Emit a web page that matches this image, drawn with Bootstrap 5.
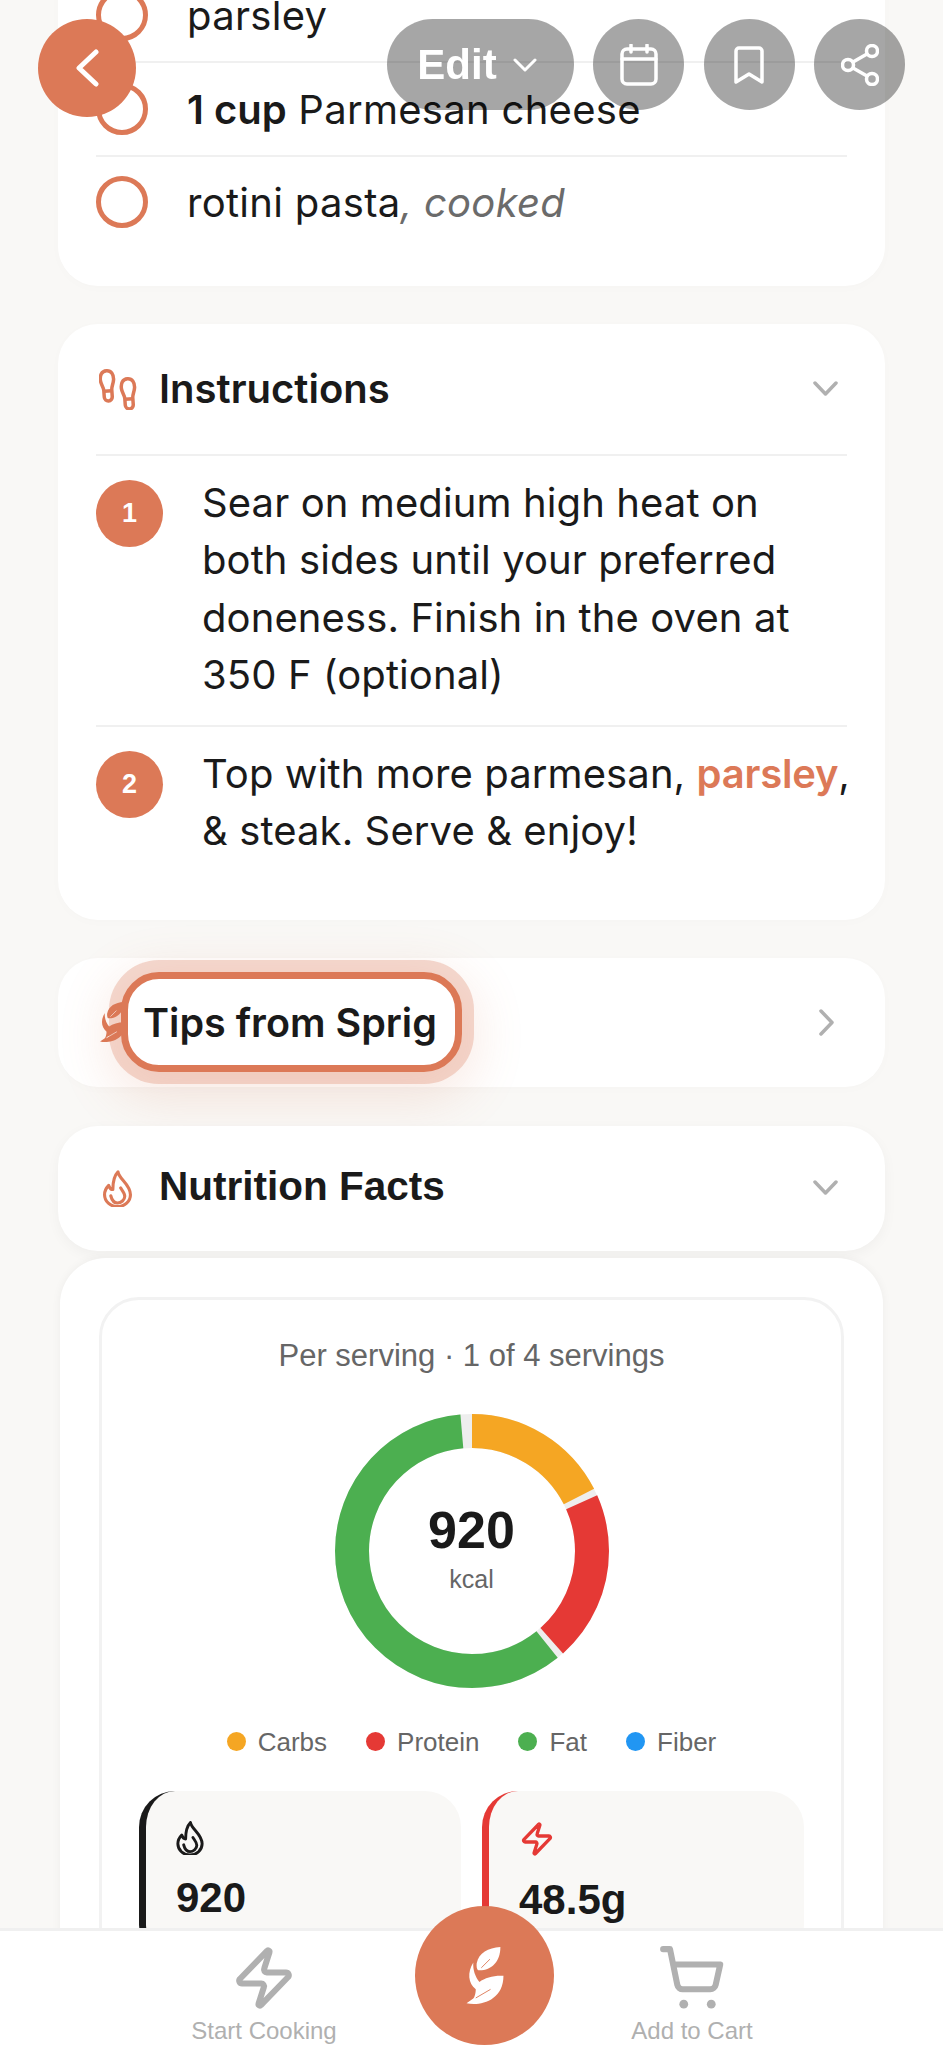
<!DOCTYPE html>
<html>
<head>
    <title>Recipe</title>
    <link href="https://cdn.jsdelivr.net/npm/bootstrap@5.3.0/dist/css/bootstrap.min.css" rel="stylesheet">
    <script src="https://cdn.jsdelivr.net/npm/bootstrap@5.3.0/dist/js/bootstrap.bundle.min.js"></script>
    <style>
        html, body { height: 2047px; overflow: hidden; }
        body { background: #f9f8f6; color: #1a1a1a; font-family: "Inter", "Liberation Sans", sans-serif; font-size: 40px; line-height: 57.3px; }
        svg { display: block; flex: none; }
        .page-scroll { height: 2078px; padding: 0 58px; margin-top: -31px; overflow: hidden; }
        .recipe-card { background: #fff; border: 0; border-radius: 40px; margin-bottom: 38px; box-shadow: 0 2px 12px rgba(0,0,0,.015); }
        .ingredients { padding: 0 38px 39px; border-radius: 0 0 40px 40px; }
        .ing-row { height: 94px; gap: 39px; letter-spacing: .3px; border-bottom: 2px solid #f0f0f0; }
        .ing-row.last-row { height: 90px; border-bottom: 0; }
        .ing-text { padding-top: 2px; }
        .check-ring { width: 52px; height: 52px; border: 5px solid #dc7957; border-radius: 50%; flex: none; }
        .qty { font-weight: 600; letter-spacing: 0; }
        .note { color: #6b6b6b; font-style: italic; }
        .sec-head { height: 130px; padding: 0 47px 0 41px; gap: 21px; font-weight: 600; }
        .sec-title { flex: 1; }
        .steps { margin: 0 38px; padding-bottom: 38px; border-top: 2px solid #f0f0f0; }
        .step-row { gap: 39px; padding: 18px 0 22px; letter-spacing: .1px; }
        .step-row + .step-row { border-top: 2px solid #f0f0f0; }
        .step-text { margin-right: -8px; }
        .step-num { width: 67px; height: 67px; margin-top: 6px; border-radius: 50%; background: #dc7957; color: #fff; font: 700 27px "Liberation Sans", sans-serif; flex: none; }
        .step-link { color: #dc7957; font-weight: 600; letter-spacing: -.2px; }
        .tips-card { height: 129px; margin-bottom: 39px; }
        .tips-spot { position: absolute; left: 63px; top: 14px; height: 100px; padding: 3px 18px 0 15px; background: #fff; border: 7px solid #dc7957; border-radius: 38px; font-size: 39.500px; font-weight: 600; white-space: nowrap; box-shadow: 0 0 0 12px rgba(220,122,90,.28), 0 14px 50px 14px rgba(220,122,90,.16); }
        .nutri-head { height: 125px; margin-bottom: 7px; font-family: "Liberation Sans", sans-serif; font-weight: 700; font-size: 40.500px; box-shadow: 0 4px 14px rgba(0,0,0,.04); }
        .nutri-title { padding-bottom: 4px; }
        .flame-icon { margin: 0 6px 0 4px; }
        .nutri-card { margin: 0 2px; padding: 39px 39px 0; border-radius: 46px; font-family: "Liberation Sans", sans-serif; box-shadow: 0 0 10px rgba(0,0,0,.05); }
        .nutri-box { height: 680px; padding: 36px 37px 0; border: 3px solid #f2f2f2; border-radius: 40px; }
        .serving { color: #666; font-size: 31px; line-height: 40px; }
        .donut-wrap { width: 274px; height: 274px; margin: 38px auto 0; }
        .donut-label { position: absolute; inset: 0; padding-bottom: 6px; }
        .kcal-num { font-size: 52px; font-weight: 700; line-height: 60px; }
        .kcal-unit { margin-top: 3px; color: #666; font-size: 25px; line-height: 32px; }
        .legend-line { gap: 39px; margin-top: 38px; color: #666; font-size: 26px; line-height: 32px; }
        .legend-dot { width: 19px; height: 19px; margin-right: 12px; border-radius: 50%; }
        .stat-grid { display: grid; grid-template-columns: 1fr 1fr; gap: 21px; margin-top: 33px; }
        .stat-box { padding: 30px 30px; height: 170px; background: #f9f8f6; border-left: 7px solid #1a1a1a; border-radius: 36px; }
        .stat-box.red-line { border-left-color: #e53935; }
        .stat-val { margin-top: 18px; font-size: 42px; font-weight: 700; line-height: 50px; }
        .top-actions { position: fixed; top: 19px; left: 38px; right: 38px; }
        .back-btn { width: 98px; height: 98px; background: #dc7957; }
        .float-btn { width: 91px; height: 91px; margin-left: 19.500px; background: rgba(0,0,0,.35); }
        .edit-btn { width: 187px; height: 91px; padding-right: 6px !important; gap: 16px; background: rgba(0,0,0,.35); color: #fff; font: 700 42px "Liberation Sans", sans-serif; }
        .bottom-nav { position: fixed; left: 0; right: 0; bottom: 0; height: 119px; background: #fff; border-top: 3px solid #f0f0f0; font-family: "Liberation Sans", sans-serif; }
        .nav-act { position: absolute; top: 14px; color: #b0b0b0; font-size: 24px; line-height: 28px; white-space: nowrap; }
        .nav-act span { margin-top: 6px; }
        .fab-btn { position: absolute; left: 415px; top: -25px; width: 139px; height: 139px; background: #dc7957; }
    </style>
</head>
<body>
    <div class="page-scroll">
        <div class="card recipe-card ingredients">
            <div class="d-flex align-items-center ing-row"><div class="check-ring"></div><div class="ing-text">parsley</div></div>
            <div class="d-flex align-items-center ing-row"><div class="check-ring"></div><div class="ing-text"><span class="qty">1 cup</span> Parmesan cheese</div></div>
            <div class="d-flex align-items-center ing-row last-row"><div class="check-ring"></div><div class="ing-text">rotini pasta<span class="note">, cooked</span></div></div>
        </div>

        <div class="card recipe-card">
            <div class="d-flex align-items-center sec-head">
                <svg width="39" height="41" viewBox="0 0 39 41" fill="none" stroke="#dc7957" stroke-width="3.500" stroke-linejoin="round">
                    <g id="foot" transform="rotate(-4 8.500 17)"><path d="M8.500 1.800C13.500 1.800 15.500 6 15 11C14.500 15 12.500 18 12.500 21V28a4 4 0 0 1-8 0V21C4.500 18 2 15 1.800 11C1.500 6 3.500 1.800 8.500 1.800Z"/><path d="M4.500 22H12.500"/></g>
                    <use href="#foot" x="21" y="8"/>
                </svg>
                <div class="sec-title">Instructions</div>
                <svg width="25" height="16" viewBox="0 0 25 16" fill="none" stroke="#b0b0b0" stroke-width="3.5" stroke-linecap="round" stroke-linejoin="round"><path d="M2 2l10.500 11L23 2"/></svg>
            </div>
            <div class="steps">
                <div class="d-flex step-row">
                    <div class="d-flex align-items-center justify-content-center step-num">1</div>
                    <div class="step-text">Sear on medium high heat on both sides until your preferred doneness. Finish in the oven at 350 F (optional)</div>
                </div>
                <div class="d-flex step-row">
                    <div class="d-flex align-items-center justify-content-center step-num">2</div>
                    <div class="step-text">Top with more parmesan, <span class="step-link">parsley</span>, &amp; steak. Serve &amp; enjoy!</div>
                </div>
            </div>
        </div>

        <div class="card recipe-card tips-card position-relative">
            <div class="d-flex align-items-center sec-head h-100">
                <svg width="28" height="44" viewBox="125 125 130 200" fill="#dc7957"><path d="M240 132C200 135 170 150 163 185C162 195 163 205 168 208C210 210 240 180 240 132Z"/><path d="M152 183C132 215 135 250 160 270C160 285 155 298 152 300L130 315C170 325 250 310 250 226C220 224 190 232 172 246C158 230 150 205 152 183Z"/><path d="M178 200L206 172M160 298L208 270" stroke="#fff" stroke-width="4" fill="none"/></svg>
                <div class="sec-title"></div>
                <svg class="me-1" width="15" height="27" viewBox="0 0 15 27" fill="none" stroke="#b0b0b0" stroke-width="3.500" stroke-linecap="round" stroke-linejoin="round"><path d="M2 2l11 11.500L2 25"/></svg>
            </div>
            <div class="d-flex align-items-center tips-spot">Tips from Sprig</div>
        </div>

        <div class="card recipe-card nutri-head">
            <div class="d-flex align-items-center sec-head h-100">
                <svg class="flame-icon" width="29" height="37" viewBox="0.5 0.5 28 35" fill="none" stroke="#dc7957" stroke-width="3" stroke-linecap="round" stroke-linejoin="round">
                    <path d="M15 2c1 7 12 12 12 22a12.500 11.500 0 0 1-25 0c0-4 2-7 4-9 1 3 3 4 4 4 0-7 1-13 5-17z"/>
                    <path d="M8 25c1 4 3 7 6.500 7s7-3 7-6.500c0-3-2-5-4-8"/>
                </svg>
                <div class="sec-title nutri-title">Nutrition Facts</div>
                <svg width="25" height="16" viewBox="0 0 25 16" fill="none" stroke="#b0b0b0" stroke-width="3.5" stroke-linecap="round" stroke-linejoin="round"><path d="M2 2l10.500 11L23 2"/></svg>
            </div>
        </div>

        <div class="card recipe-card nutri-card">
            <div class="nutri-box">
                <div class="text-center serving">Per serving · 1 of 4 servings</div>
                <div class="position-relative donut-wrap">
                    <svg width="274" height="274" viewBox="0 0 274 274" fill="none" stroke-width="34">
                        <circle cx="137" cy="137" r="120" stroke="#eeeeee"/>
                        <g id="donut-parts" transform="rotate(-90 137 137)"></g>
                    </svg>
                    <div class="d-flex flex-column align-items-center justify-content-center donut-label">
                        <div class="kcal-num">920</div>
                        <div class="kcal-unit">kcal</div>
                    </div>
                </div>
                <div class="d-flex justify-content-center legend-line">
                    <div class="d-flex align-items-center"><div class="legend-dot" style="background:#f5a623"></div>Carbs</div>
                    <div class="d-flex align-items-center"><div class="legend-dot" style="background:#e53935"></div>Protein</div>
                    <div class="d-flex align-items-center"><div class="legend-dot" style="background:#4caf50"></div>Fat</div>
                    <div class="d-flex align-items-center"><div class="legend-dot" style="background:#2196f3"></div>Fiber</div>
                </div>
                <div class="stat-grid">
                    <div class="stat-box">
                        <svg width="28" height="34" viewBox="0.5 0.5 28 35" fill="none" stroke="#1a1a1a" stroke-width="3" stroke-linecap="round" stroke-linejoin="round">
                            <path d="M15 2c1 7 12 12 12 22a12.500 11.500 0 0 1-25 0c0-4 2-7 4-9 1 3 3 4 4 4 0-7 1-13 5-17z"/>
                            <path d="M8 25c1 4 3 7 6.500 7s7-3 7-6.500c0-3-2-5-4-8"/>
                        </svg>
                        <div class="stat-val">920</div>
                    </div>
                    <div class="stat-box red-line">
                        <svg width="36" height="36" viewBox="0 0 24 24" fill="none" stroke="#e53935" stroke-width="2.200" stroke-linejoin="round"><path d="M4 14a1 1 0 0 1-.78-1.630l9.900-10.200a.5.500 0 0 1 .86.460l-1.920 6.020A1 1 0 0 0 13 10h7a1 1 0 0 1 .78 1.630l-9.900 10.200a.5.500 0 0 1-.86-.460l1.920-6.020A1 1 0 0 0 11 14z"/></svg>
                        <div class="stat-val">48.5g</div>
                    </div>
                </div>
            </div>
        </div>
    </div>

    <div class="d-flex align-items-start top-actions">
        <button class="btn rounded-circle d-flex align-items-center justify-content-center p-0 border-0 back-btn">
            <svg width="24" height="38" viewBox="0 0 24 38" fill="none" stroke="#fff" stroke-width="5" stroke-linecap="round" stroke-linejoin="round"><path d="M21 3L4 19l17 16"/></svg>
        </button>
        <button class="btn rounded-pill d-flex align-items-center justify-content-center p-0 border-0 edit-btn ms-auto">Edit
            <svg width="24" height="14" viewBox="0 0 24 14" fill="none" stroke="#fff" stroke-width="3" stroke-linecap="round" stroke-linejoin="round"><path d="M2 2l10 10L22 2"/></svg>
        </button>
        <button class="btn rounded-circle d-flex align-items-center justify-content-center p-0 border-0 float-btn">
            <svg width="38" height="42" viewBox="0 0 38 42" fill="none" stroke="#fff" stroke-width="3.500" stroke-linecap="round" stroke-linejoin="round"><rect x="2" y="5" width="34" height="35" rx="5"/><path d="M2 15h34M11 1v7M27 1v7"/></svg>
        </button>
        <button class="btn rounded-circle d-flex align-items-center justify-content-center p-0 border-0 float-btn">
            <svg width="30" height="38" viewBox="0 0 30 38" fill="none" stroke="#fff" stroke-width="3.500" stroke-linecap="round" stroke-linejoin="round"><path d="M2 36V5a3 3 0 0 1 3-3h20a3 3 0 0 1 3 3v31L15 28z"/></svg>
        </button>
        <button class="btn rounded-circle d-flex align-items-center justify-content-center p-0 border-0 float-btn">
            <svg width="38" height="42" viewBox="0 0 38 42" fill="none" stroke="#fff" stroke-width="3.500" stroke-linecap="round"><circle cx="31" cy="7" r="5.500"/><circle cx="7" cy="21" r="5.500"/><circle cx="31" cy="35" r="5.500"/><path d="M12 18l14-8M12 24l14 8"/></svg>
        </button>
    </div>

    <div class="bottom-nav">
        <div class="d-flex flex-column align-items-center nav-act" style="left:192px;width:144px">
            <svg width="66" height="66" viewBox="0 0 24 24" fill="none" stroke="#b0b0b0" stroke-width="2.200" stroke-linejoin="round"><path d="M4 14a1 1 0 0 1-.78-1.630l9.900-10.200a.5.500 0 0 1 .86.460l-1.920 6.020A1 1 0 0 0 13 10h7a1 1 0 0 1 .78 1.630l-9.900 10.200a.5.500 0 0 1-.86-.460l1.920-6.020A1 1 0 0 0 11 14z"/></svg>
            <span>Start Cooking</span>
        </div>
        <button class="btn rounded-circle d-flex align-items-center justify-content-center p-0 border-0 fab-btn">
            <svg width="40" height="63" viewBox="125 125 130 200" fill="#fff"><path d="M240 132C200 135 170 150 163 185C162 195 163 205 168 208C210 210 240 180 240 132Z"/><path d="M152 183C132 215 135 250 160 270C160 285 155 298 152 300L130 315C170 325 250 310 250 226C220 224 190 232 172 246C158 230 150 205 152 183Z"/><path d="M178 200L206 172M160 298L208 270" stroke="#dc7957" stroke-width="3" fill="none"/></svg>
        </button>
        <div class="d-flex flex-column align-items-center nav-act" style="left:630px;width:124px">
            <svg width="66" height="66" viewBox="0 0 24 24" fill="none" stroke="#b0b0b0" stroke-width="2.200" stroke-linecap="round" stroke-linejoin="round"><path d="M1.500 1.500h2.500l2.660 13a2 2 0 0 0 2 1.580h10a2 2 0 0 0 1.950-1.570l1.650-7.430H5.120"/><circle cx="9" cy="21.500" r="1.600" fill="#b0b0b0" stroke="none"/><circle cx="19" cy="21.500" r="1.600" fill="#b0b0b0" stroke="none"/></svg>
            <span>Add to Cart</span>
        </div>
    </div>

    <script>
        // donut segments, start and end in degrees from 12 o'clock
        const parts = [['#f5a623', 0, 63], ['#e53935', 66, 138.3], ['#4caf50', 141.2, 355]];
        const circ = 2 * Math.PI * 120;
        document.getElementById('donut-parts').innerHTML = parts.map(p => {
            const len = (p[2] - p[1]) / 360 * circ;
            const off = -p[1] / 360 * circ;
            return `<circle cx="137" cy="137" r="120" stroke="${p[0]}" stroke-dasharray="${len} ${circ - len}" stroke-dashoffset="${off}"/>`;
        }).join('');
    </script>
</body>
</html>
